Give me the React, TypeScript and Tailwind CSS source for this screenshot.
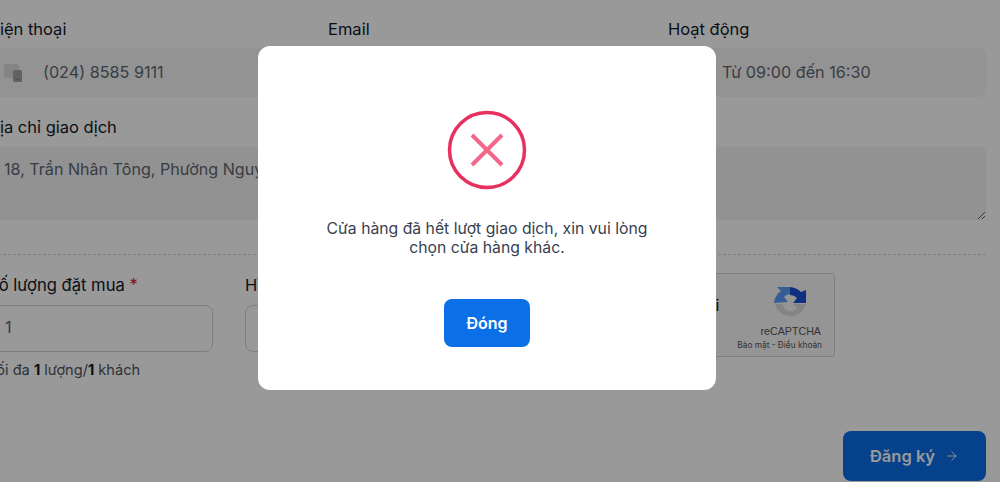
import React from 'react';
import { ArrowRight } from 'lucide-react';

const Label = ({ children }: { children: React.ReactNode }) => (
  <div className="text-[16.5px] leading-6 text-[#111827]">{children}</div>
);

const PhoneIcon = () => (
  <svg width="20" height="20" viewBox="0 0 20 20" className="shrink-0">
    <rect x="0" y="1" width="15" height="14" rx="2" fill="#dcdcdc" />
    <rect x="9" y="7" width="9" height="12" rx="1.5" fill="#a3a3a3" />
    <circle cx="13.5" cy="16.5" r="0.7" fill="#555" />
  </svg>
);

const RecaptchaLogo = () => (
  <svg width="34" height="34" viewBox="0 0 34 34">
    <path d="M33 17 A16 16 0 0 1 2 17 L9 17 L11 20 A7.5 7.5 0 0 0 24 21 L20 17 Z" fill="#dcdcdc" />
    <path d="M1 16 A16 16 0 0 1 8 4 L4 0 L17 0 L17 1 L17 7 A10 10 0 0 0 11 10 L15 15 L1 16 Z" fill="#5b9bf5" />
    <path d="M17 0 A16 16 0 0 1 28 5 L33 3 L33 16 L20 16 L24 11 A10 10 0 0 0 17 8 Z" fill="#1c4fd8" />
  </svg>
);

export default function App() {
  return (
    <div className="relative w-[1000px] h-[482px] overflow-hidden bg-white font-['Inter',sans-serif]">
      <div className="-ml-[12px] w-[998px] pt-[17px]">
        <div className="grid grid-cols-[318px_318px_318px] gap-x-[22px]">
          <div>
            <Label>Điện thoại</Label>
            <div className="mt-[7px] h-[49px] bg-[#f6f6f6] rounded-md flex items-center pl-4 gap-[19px] text-[16.2px] text-[#5f6672]">
              <PhoneIcon />
              <span>(024) 8585 9111</span>
            </div>
          </div>
          <div>
            <Label>Email</Label>
            <div className="mt-[7px] h-[49px] bg-[#f6f6f6] rounded-md" />
          </div>
          <div>
            <Label>Hoạt động</Label>
            <div className="mt-[7px] h-[49px] bg-[#f6f6f6] rounded-md flex items-center pl-[54px] text-[16.2px] text-[#5f6672]">
              Từ 09:00 đến 16:30
            </div>
          </div>
        </div>

        <div className="mt-[18px]">
          <Label>Địa chỉ giao dịch</Label>
          <textarea
            readOnly
            defaultValue="18, Trần Nhân Tông, Phường Nguyễn Du, Quận Hai Bà Trưng, Hà Nội"
            className="block mt-2 w-[998px] h-[73px] bg-[#f4f4f4] rounded-md pl-4 py-[10px] text-[16.1px] text-[#5f6672] outline-none"
          />
        </div>

        <div className="mt-[34px] border-t border-dashed border-[#d4d4d4]" />

        <div className="mt-[18px] flex items-start">
          <div className="w-[225px]">
            <div className="text-[16.6px] leading-6 text-[#111827]">
              Số lượng đặt mua <span className="text-[#dc2626]">*</span>
            </div>
            <div className="mt-2 h-[47px] border border-[#d1d5db] rounded-lg flex items-center pl-4 pb-[3px] text-[16.2px] text-[#5f6672]">
              1
            </div>
            <div className="mt-2 text-[14.6px] leading-5 text-[#4b5563]">
              Tối đa <b className="text-[#111827]">1</b> lượng/<b className="text-[#111827]">1</b> khách
            </div>
          </div>
          <div className="ml-[32px] w-[254px]">
            <Label>Hình thức</Label>
            <div className="mt-2 h-[47px] border border-[#d1d5db] rounded-lg" />
          </div>
          <div className="ml-[32px] w-[304px] h-[84px] border border-[#d1d5db] rounded-[3px] bg-[#f9f9f9] flex items-center justify-end pr-3">
            <span className="mr-[18px] mb-5 text-base text-[#111827] whitespace-nowrap">Tôi không phải là người</span>
            <div className="flex flex-col items-end shrink-0">
              <div className="mt-[8px] mr-[15px]"><RecaptchaLogo /></div>
              <span className="mt-[3px] mr-px text-[10.7px] leading-[14px] text-[#555] font-['Liberation_Sans',sans-serif]">reCAPTCHA</span>
              <span className="text-[8.3px] leading-[14px] text-[#555] whitespace-nowrap">Bảo mật - Điều khoản</span>
            </div>
          </div>
        </div>

        <div className="mt-[51px] flex justify-end">
          <button className="w-[143px] h-[50px] rounded-lg bg-[#0b6fe8] text-white text-[16.5px] font-semibold flex items-center justify-center gap-[10px]">
            Đăng ký
            <ArrowRight size={14} strokeWidth={1.5} />
          </button>
        </div>
      </div>

      {/* modal overlay */}
      <div className="absolute inset-0 bg-black/40">
        <div className="absolute left-[258px] top-[46px] w-[458px] h-[344px] bg-white rounded-xl flex flex-col items-center pt-[64px]">
          <svg width="80" height="80" viewBox="0 0 80 80" className="shrink-0">
            <circle cx="40" cy="40" r="37.5" fill="none" stroke="#e8305f" strokeWidth="3.5" />
            <path d="M25 25 L55 55 M55 25 L25 55" stroke="#f4668a" strokeWidth="4" />
          </svg>
          <p className="mt-[29px] w-[340px] text-center text-[15.75px] leading-[19px] text-[#374151]">
            Cửa hàng đã hết lượt giao dịch, xin vui lòng chọn cửa hàng khác.
          </p>
          <button className="mt-[42px] w-[86px] h-[48px] rounded-lg bg-[#0b6fe8] text-white text-base font-semibold">
            Đóng
          </button>
        </div>
      </div>
    </div>
  );
}
